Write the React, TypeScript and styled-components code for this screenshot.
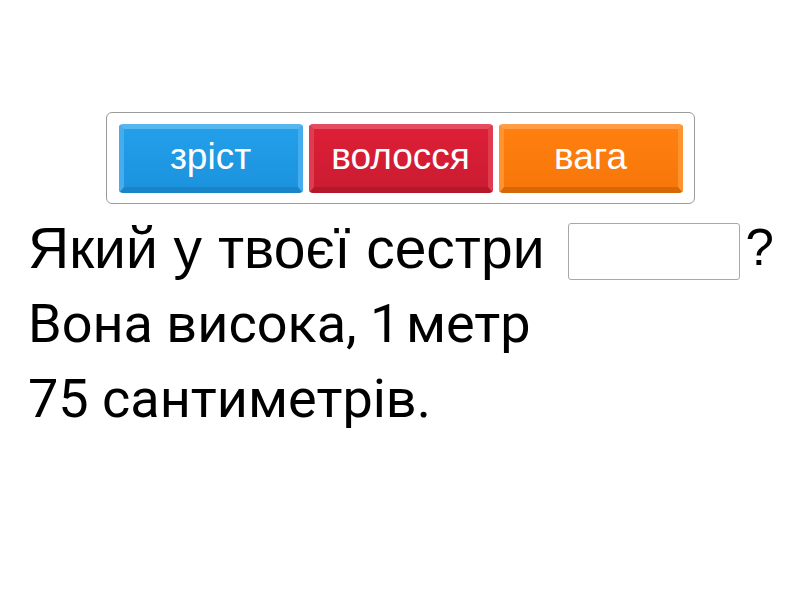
import React from "react";
import styled, { createGlobalStyle } from "styled-components";

const GlobalStyle = createGlobalStyle`
  html, body {
    margin: 0;
    padding: 0;
    background: #ffffff;
  }
  body {
    font-family: "Roboto", "Noto Sans", sans-serif;
  }
`;

const Page = styled("div")`
  width: 800px;
  height: 600px;
  padding-top: 112px;
  box-sizing: border-box;
  display: flex;
  flex-direction: column;
`;

const Bank = styled("div")`
  align-self: center;
  display: flex;
  gap: 6px;
  padding: 11px 11px 10px 12px;
  border: 1px solid #9a9a9a;
  border-radius: 6px;
`;

const palette = {
  blue: { top: "#55b6f0", face: "#239fe9", low: "#1c93de", bottom: "#1a84c8", side: "#45aded" },
  red: { top: "#e44d60", face: "#dc1f37", low: "#cc1c32", bottom: "#b5182b", side: "#e03c50" },
  orange: { top: "#ff9e45", face: "#ff800f", low: "#f7770a", bottom: "#d66806", side: "#ff9330" },
};

type Tone = keyof typeof palette;

const Tile = styled("div")<{ $tone: Tone }>`
  width: 184px;
  height: 69px;
  box-sizing: border-box;
  border-radius: 4px;
  border-style: solid;
  border-width: 5px 5px 6px 5px;
  border-color: ${(p) => palette[p.$tone].top} ${(p) => palette[p.$tone].side}
    ${(p) => palette[p.$tone].bottom} ${(p) => palette[p.$tone].side};
  background: linear-gradient(
    ${(p) => palette[p.$tone].face},
    ${(p) => palette[p.$tone].low}
  );
  color: #ffffff;
  font-family: "Liberation Sans", Arial, sans-serif;
  font-size: 37px;
  display: flex;
  align-items: center;
  justify-content: center;
  padding-bottom: 3px;
`;

const Text = styled("div")`
  padding-left: 28px;
  font-size: 54px;
  line-height: 75px;
  color: #000;
  margin-top: 6px;
`;

const Question = styled("div")`
  display: flex;
  align-items: center;
  white-space: nowrap;
  font-family: "Liberation Sans", Arial, sans-serif;
  font-size: 57px;
  line-height: 76px;
`;

const Mark = styled("span")`
  font-size: 51px;
`;

const Line = styled("div")`
  white-space: nowrap;
`;

const Blank = styled("span")`
  display: inline-block;
  width: 172px;
  height: 57px;
  box-sizing: border-box;
  border: 1px solid #a8a8a8;
  border-radius: 3px;
  margin: 7px 6px 0 23px;
`;

const words: { text: string; tone: Tone }[] = [
  { text: "зріст", tone: "blue" },
  { text: "волосся", tone: "red" },
  { text: "вага", tone: "orange" },
];

export default function App() {
  return (
    <>
      <GlobalStyle />
      <Page>
        <Bank>
          {words.map((w) => (
            <Tile key={w.text} $tone={w.tone}>
              {w.text}
            </Tile>
          ))}
        </Bank>
        <Text>
          <Question>
            Який у твоєї сестри
            <Blank />
            <Mark>?</Mark>
          </Question>
          <Line>Вона висока, 1&#8202;метр</Line>
          <Line>75 сантиметрів.</Line>
        </Text>
      </Page>
    </>
  );
}
